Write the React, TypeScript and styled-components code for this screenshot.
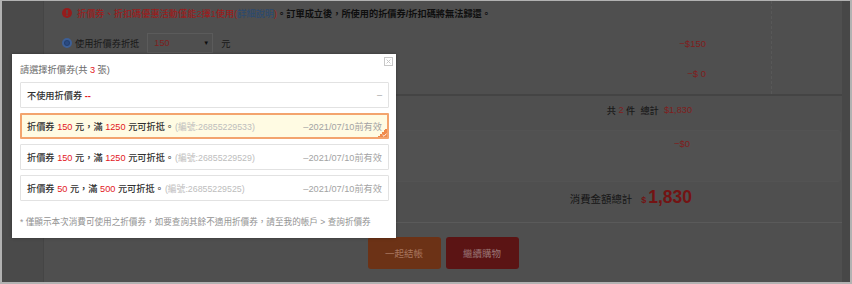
import styled, { createGlobalStyle } from 'styled-components';

const GlobalStyle = createGlobalStyle`
  html, body { margin: 0; padding: 0; }
  body {
    font-family: "Liberation Sans", "Noto Sans CJK TC", sans-serif;
    font-size: 9.2px;
  }
`;

const coupons = [
  { amount: 150, min: 1250, code: '26855229533', selected: true },
  { amount: 150, min: 1250, code: '26855229529', selected: false },
  { amount: 50, min: 500, code: '26855229525', selected: false },
];

export default function App() {
  return (
    <>
      <GlobalStyle />
      <Screen>
        <Gutter />
        <Content>
          <OrderTable>
            <MainCell>
              <Notice>
                <AlertIcon width="10" height="10" viewBox="0 0 10 10">
                  <circle cx="5" cy="5" r="5" fill="#951c1c" />
                  <rect x="4.3" y="2" width="1.4" height="3.8" fill="#4f4f4f" />
                  <rect x="4.3" y="6.6" width="1.4" height="1.4" fill="#4f4f4f" />
                </AlertIcon>
                <NoticeRed>折價券、折扣碼優惠活動僅能2擇1使用(<NoticeLink>詳細說明</NoticeLink>)</NoticeRed>
                <NoticeDark>。訂單成立後，所使用的折價券/折扣碼將無法歸還。</NoticeDark>
              </Notice>
              <DiscountLine>
                <CouponChoice>
                  <Radio />
                  <ChoiceLabel>使用折價券折抵</ChoiceLabel>
                  <SelectBox>
                    <span>150</span>
                    <Caret>▼</Caret>
                  </SelectBox>
                  <ChoiceLabel>元</ChoiceLabel>
                </CouponChoice>
                <Amount>−$150</Amount>
              </DiscountLine>
              <DiscountLine>
                <span />
                <Amount>−$ 0</Amount>
              </DiscountLine>
            </MainCell>
            <SideCell />
          </OrderTable>

          <CountRow>
            共 <RedText>2</RedText> 件&nbsp;&nbsp;總計&nbsp;&nbsp;<RedText>$1,830</RedText>
          </CountRow>

          <DiscountPanel>
            <Amount>−$0</Amount>
          </DiscountPanel>

          <TotalRow>
            <TotalLabel>消費金額總計</TotalLabel>
            <TotalPrice>
              <small>$</small>1,830
            </TotalPrice>
          </TotalRow>

          <ButtonRow>
            <ActionButton $tone="orange">一起結帳</ActionButton>
            <ActionButton $tone="red">繼續購物</ActionButton>
          </ButtonRow>
        </Content>
        <RightStrip />

        <Modal>
          <CloseButton width="9" height="9" viewBox="0 0 9 9">
            <rect x="0.5" y="0.5" width="8" height="8" fill="#fff" stroke="#c8c8c8" />
            <path d="M2.6 2.6 L6.4 6.4 M6.4 2.6 L2.6 6.4" stroke="#c8c8c8" strokeWidth="1" />
          </CloseButton>
          <ModalTitle>
            請選擇折價券(共 <Hot>3</Hot> 張)
          </ModalTitle>
          <OptionList>
            <CouponOption>
              <OptionMain>
                不使用折價券 <Hot $bold>--</Hot>
              </OptionMain>
              <Expiry>–</Expiry>
            </CouponOption>
            {coupons.map((c) => (
              <CouponOption key={c.code} $selected={c.selected}>
                <OptionMain>
                  折價券 <Hot>{c.amount}</Hot> 元，滿 <Hot>{c.min}</Hot> 元可折抵。
                  <Code>(編號:{c.code})</Code>
                </OptionMain>
                <Expiry>–2021/07/10前有效</Expiry>
                {c.selected && (
                  <Corner>
                    <svg width="5" height="4" viewBox="0 0 5 4">
                      <path d="M0.5 2 L2 3.3 L4.5 0.6" stroke="#fff" strokeWidth="0.9" fill="none" />
                    </svg>
                  </Corner>
                )}
              </CouponOption>
            ))}
          </OptionList>
          <ModalNote>* 僅顯示本次消費可使用之折價券，如要查詢其餘不適用折價券，請至我的帳戶 &gt; 查詢折價券</ModalNote>
        </Modal>
      </Screen>
    </>
  );
}

const Screen = styled.div`
  position: relative;
  width: 852px;
  height: 284px;
  box-sizing: border-box;
  border-style: solid;
  border-color: #b2b2b2;
  border-width: 1px 2px 2px 2px;
  display: flex;
  overflow: hidden;
  background: #4b4b4b;
`;

const Gutter = styled.div`
  width: 41px;
  background: #4a4a4a;
  border-right: 1px solid #454545;
`;

const Content = styled.main`
  width: 798px;
  background: #4f4f4f;
  display: flex;
  flex-direction: column;
`;

const RightStrip = styled.div`
  flex: 1;
  background: #474747;
`;

const OrderTable = styled.div`
  display: flex;
  height: 93px;
  border-bottom: 2px solid #444444;
`;

const MainCell = styled.div`
  width: 727px;
  box-sizing: border-box;
  padding: 2px 65px 0 18px;
  display: flex;
  flex-direction: column;
  gap: 10px;
`;

const SideCell = styled.div`
  flex: 1;
  border-left: 1px dashed #585858;
`;

const Notice = styled.div`
  height: 20px;
  display: flex;
  align-items: center;
`;

const AlertIcon = styled.svg`
  margin-right: 5px;
  flex-shrink: 0;
`;

const NoticeRed = styled.span`
  color: #991e1e;
  font-weight: 500;
`;

const NoticeLink = styled.span`
  color: #2c4a6e;
`;

const NoticeDark = styled.span`
  color: #0e0e0e;
  font-weight: 700;
`;

const DiscountLine = styled.div`
  height: 20px;
  display: flex;
  align-items: center;
  justify-content: space-between;
`;

const CouponChoice = styled.div`
  display: flex;
  align-items: center;
`;

const Radio = styled.span`
  width: 10px;
  height: 10px;
  box-sizing: border-box;
  border-radius: 50%;
  background: #2b4b82;
  border: 2px solid #3d5f96;
  box-shadow: inset 0 0 0 1px #243f6e;
  margin-right: 3px;
`;

const ChoiceLabel = styled.span`
  color: #181818;
`;

const SelectBox = styled.div`
  width: 66px;
  height: 20px;
  box-sizing: border-box;
  margin: 0 8px;
  padding: 0 3px 0 6px;
  border: 1px solid #5b5b5b;
  display: flex;
  align-items: center;
  justify-content: space-between;
  color: #7e1e1e;
`;

const Caret = styled.span`
  color: #0c0c0c;
  font-size: 6px;
`;

const Amount = styled.span`
  color: #7f1d1d;
  font-size: 9.5px;
`;

const RedText = styled.span`
  color: #7f1d1d;
`;

const CountRow = styled.div`
  height: 28px;
  display: flex;
  align-items: center;
  justify-content: flex-end;
  padding-right: 150px;
  color: #1a1a1a;
  font-weight: 500;
  white-space: pre;
`;

const DiscountPanel = styled.div`
  margin: 6px 1px 0 0;
  height: 52px;
  box-sizing: border-box;
  padding: 6px 150px 0 0;
  display: flex;
  justify-content: flex-end;
  align-items: flex-start;
  line-height: 14px;
  background: #515151;
  border: 1px solid #535353;
  border-radius: 3px;
`;

const TotalRow = styled.div`
  height: 41px;
  box-sizing: border-box;
  padding: 4px 150px 0 0;
  display: flex;
  justify-content: flex-end;
  align-items: baseline;
  gap: 9px;
  border-bottom: 1px solid #5a5a5a;
`;

const TotalLabel = styled.span`
  color: #161616;
  font-size: 10.4px;
  line-height: 22px;
`;

const TotalPrice = styled.span`
  color: #731313;
  font-size: 17.5px;
  font-weight: 700;
  line-height: 22px;
  small {
    font-size: 9px;
    margin-right: 2px;
  }
`;

const ButtonRow = styled.div`
  margin-top: 14px;
  display: flex;
  justify-content: center;
  gap: 5px;
`;

const ActionButton = styled.button<{ $tone: 'orange' | 'red' }>`
  width: 73px;
  height: 32px;
  border: none;
  border-radius: 3px;
  font-family: inherit;
  font-size: 9.5px;
  background: ${(p) => (p.$tone === 'orange' ? '#6c3216' : '#5b1414')};
  color: ${(p) => (p.$tone === 'orange' ? '#a8755e' : '#9a7676')};
`;

const Modal = styled.div`
  position: absolute;
  left: 10px;
  top: 53px;
  width: 384px;
  height: 184px;
  box-sizing: border-box;
  padding: 7px 7px 0 8px;
  background: #ffffff;
  box-shadow: 0 0 3px rgba(0, 0, 0, 0.35);
`;

const CloseButton = styled.svg`
  position: absolute;
  top: 3px;
  right: 3px;
`;

const ModalTitle = styled.div`
  height: 18px;
  line-height: 18px;
  color: #6a6a6a;
`;

const Hot = styled.span<{ $bold?: boolean }>`
  color: #e2171d;
  font-weight: ${(p) => (p.$bold ? 700 : 500)};
`;

const OptionList = styled.div`
  margin-top: 3px;
  display: flex;
  flex-direction: column;
  gap: 5px;
`;

const CouponOption = styled.div<{ $selected?: boolean }>`
  position: relative;
  height: 26px;
  box-sizing: border-box;
  display: flex;
  align-items: center;
  justify-content: space-between;
  padding: 0 ${(p) => (p.$selected ? 5 : 6)}px;
  border: ${(p) => (p.$selected ? '2px solid #f3a46e' : '1px solid #e2e2e2')};
  background: ${(p) => (p.$selected ? '#fffbe3' : '#ffffff')};
  border-radius: 1px;
`;

const OptionMain = styled.span`
  color: #303030;
  font-weight: 500;
  white-space: pre;
`;

const Code = styled.span`
  color: #bdbdbd;
  font-weight: 400;
  font-size: 8.8px;
  margin-left: 1px;
`;

const Expiry = styled.span`
  color: #a3a3a3;
`;

const Corner = styled.span`
  position: absolute;
  right: 0;
  bottom: 0;
  width: 9px;
  height: 9px;
  background: linear-gradient(135deg, transparent 50%, #f08a4b 50%);
  display: flex;
  align-items: flex-end;
  justify-content: flex-end;
  svg {
    display: block;
  }
`;

const ModalNote = styled.div`
  margin-top: 14px;
  font-size: 8.6px;
  line-height: 14px;
  color: #939393;
`;
